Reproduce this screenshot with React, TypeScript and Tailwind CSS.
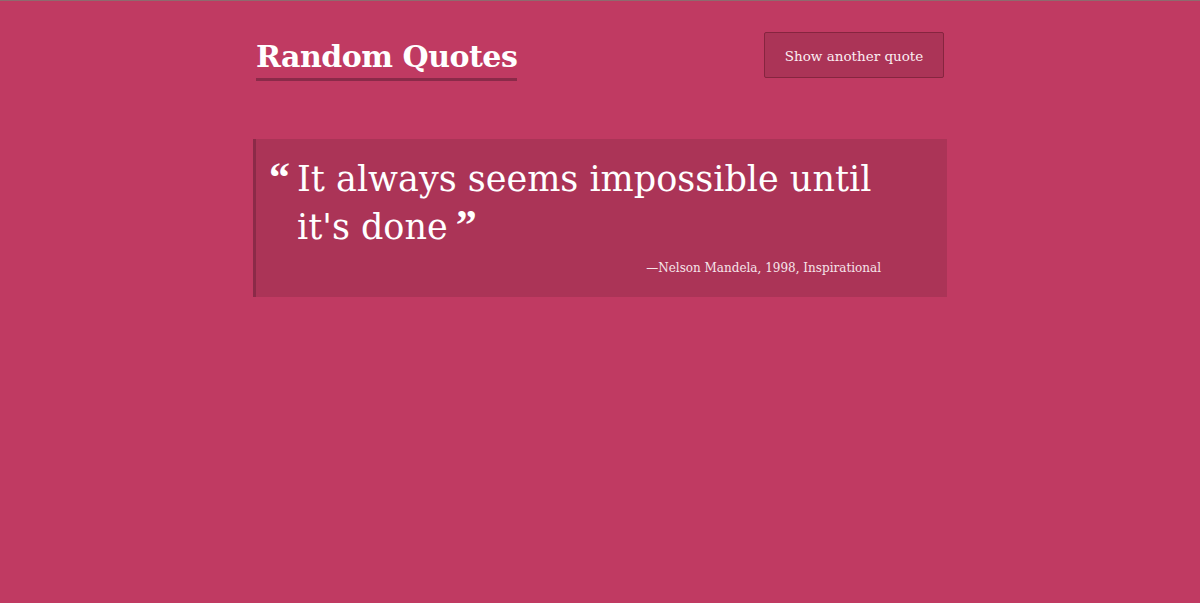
export default function App() {
  const quote = {
    first: 'It always seems impossible until',
    rest: "it's done",
    author: 'Nelson Mandela',
    year: 1998,
    tag: 'Inspirational',
  }

  return (
    <main
      className="min-h-[603px] bg-[#c03a62] border-t border-[#8e6a6e] text-white"
      style={{ fontFamily: '"DejaVu Serif", "Liberation Serif", serif' }}
    >
      <div className="w-[694px] mx-auto">
        {/* Header */}
        <header className="flex items-start justify-between pt-[31px] pl-[3px] pr-[3px]">
          <h1 className="mt-[7px] text-[30px] leading-[36px] font-bold tracking-[-0.5px] border-b-[3px] border-[#8b2a49] pb-[3px]">
            Random Quotes
          </h1>
          <button className="w-[180px] h-[46px] pt-[3px] bg-[#ab3457] border border-[#86253f] rounded-[2px] text-[13.5px] text-[#fbeef2]">
            Show another quote
          </button>
        </header>

        {/* Quote */}
        <blockquote className="mt-[58px] h-[158px] bg-[#ab3457] border-l-[3px] border-[#8b2a48] pl-[13px] pr-[20px] pt-[16px]">
          <p className="flex text-[35px] leading-[48px] whitespace-nowrap">
            <span className="font-['Liberation_Serif'] text-[42px] leading-[44px] font-bold mr-[6px] w-[22px]">“</span>
            <span>
              {quote.first}
              <br />
              {quote.rest}
              <span className="font-['Liberation_Serif'] text-[42px] align-top leading-[44px] font-bold ml-[8px]">”</span>
            </span>
          </p>
          <p className="mt-[8px] pr-[46px] text-right text-[12px] text-[#f6e4ea]">
            —{quote.author}, {quote.year}, {quote.tag}
          </p>
        </blockquote>
      </div>
    </main>
  )
}
